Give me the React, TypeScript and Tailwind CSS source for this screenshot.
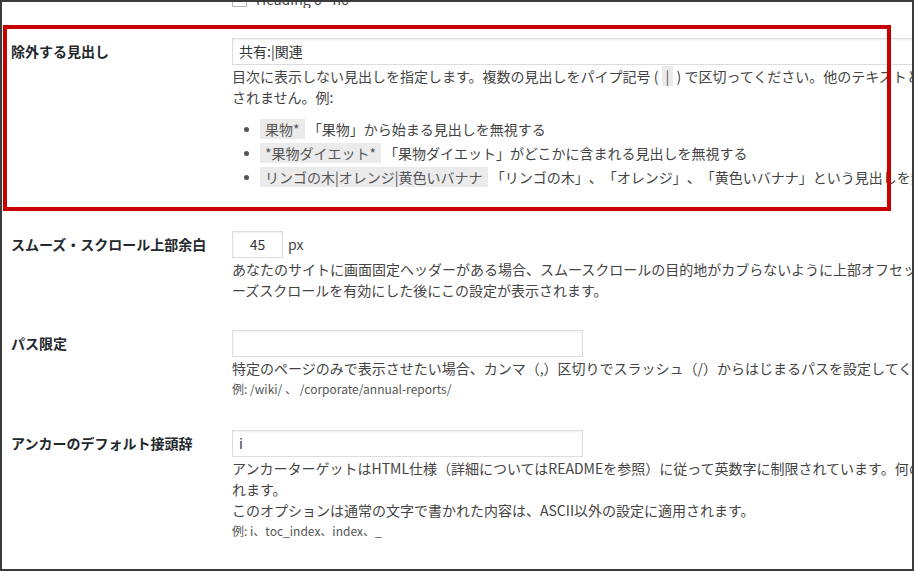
import React from "react";

const font = { fontFamily: '"Noto Sans CJK JP", "Noto Sans", sans-serif' };

function Label({ children }: { children: React.ReactNode }) {
  return (
    <div className="w-[230px] shrink-0 pl-[9px] text-[14px] font-bold leading-[27px] text-[#23282d] whitespace-nowrap">
      {children}
    </div>
  );
}

function TextInput({ value, className }: { value: string; className: string }) {
  return (
    <div
      className={`h-[27px] border border-[#dddddd] bg-white shadow-[inset_0_1px_2px_rgba(0,0,0,0.07)] text-[14px] leading-[25px] text-[#32373c] px-[6px] ${className}`}
    >
      {value}
    </div>
  );
}

function Code({ children }: { children: React.ReactNode }) {
  return (
    <span className="inline-block h-[20px] leading-[20px] px-[5px] bg-[#ebebeb] text-[#555]">
      {children}
    </span>
  );
}

function Item({ code, text }: { code: string; text: string }) {
  return (
    <li className="flex items-center h-[24px] pl-[12px] whitespace-nowrap">
      <span className="w-[5px] h-[5px] rounded-full bg-[#555] shrink-0" />
      <span className="ml-[11px]">
        <Code>{code}</Code> {text}
      </span>
    </li>
  );
}

export default function App() {
  return (
    <div
      className="relative w-[914px] h-[571px] overflow-hidden border-2 border-[#3b3b3b] bg-white [text-spacing-trim:space-all]"
      style={font}
    >
      {/* previous option group, scrolled mostly out of view */}
      <div className="h-[6px] overflow-hidden">
        <div className="-mt-[13px] pl-[230px] flex items-center gap-[9px] text-[14px] text-[#444]">
          <span className="w-[15px] h-[15px] border border-[#b4b9be] bg-white shadow-[inset_0_1px_2px_rgba(0,0,0,0.1)]" />
          <span>Heading 6 - h6</span>
        </div>
      </div>

      {/* 除外する見出し */}
      <div className="flex pt-[30px]">
        <Label>除外する見出し</Label>
        <div className="flex-1 min-w-0 text-[14px] text-[#444]">
          <TextInput value="共有:|関連" className="w-[760px]" />
          <p className="mt-[1px] leading-[21px] whitespace-nowrap">
            目次に表示しない見出しを指定します。複数の見出しをパイプ記号 ({" "}
            <span className="bg-[#ebebeb] px-[4px] text-[#555]">|</span>
            {" "}) で区切ってください。他のテキストと一致させるにはワイルドカードとしてアスタリスク ( * ) を使用します。大文字と小文字は区別
            <br />
            されません。例:
          </p>
          <ul className="mt-[9px]">
            <Item code="果物*" text="「果物」から始まる見出しを無視する" />
            <Item code="*果物ダイエット*" text="「果物ダイエット」がどこかに含まれる見出しを無視する" />
            <Item
              code="リンゴの木|オレンジ|黄色いバナナ"
              text="「リンゴの木」、「オレンジ」、「黄色いバナナ」という見出しを無視する"
            />
          </ul>
        </div>
      </div>

      {/* スムーズ・スクロール上部余白 */}
      <div className="flex pt-[42px]">
        <Label>スムーズ・スクロール上部余白</Label>
        <div className="flex-1 min-w-0 text-[14px] text-[#444]">
          <div className="flex items-center">
            <TextInput value="45" className="w-[51px] text-center" />
            <span className="ml-[5px] leading-[27px]">px</span>
          </div>
          <p className="mt-[1px] leading-[21px] whitespace-nowrap">
            あなたのサイトに画面固定ヘッダーがある場合、スムースクロールの目的地がカブらないように上部オフセットを設定してください。スム
            <br />
            ーズスクロールを有効にした後にこの設定が表示されます。
          </p>
        </div>
      </div>

      {/* パス限定 */}
      <div className="flex pt-[29px]">
        <Label>パス限定</Label>
        <div className="flex-1 min-w-0 text-[14px] text-[#444]">
          <TextInput value="" className="w-[351px]" />
          <p className="mt-[1px] leading-[21px] whitespace-nowrap">
            特定のページのみで表示させたい場合、カンマ（,）区切りでスラッシュ（/）からはじまるパスを設定してください。
          </p>
          <p className="text-[12px] leading-[19px] text-[#555] whitespace-nowrap">
            例: /wiki/ 、 /corporate/annual-reports/
          </p>
        </div>
      </div>

      {/* アンカーのデフォルト接頭辞 */}
      <div className="flex pt-[32px]">
        <Label>アンカーのデフォルト接頭辞</Label>
        <div className="flex-1 min-w-0 text-[14px] text-[#444]">
          <TextInput value="i" className="w-[351px]" />
          <p className="mt-[1px] leading-[21px] whitespace-nowrap">
            アンカーターゲットはHTML仕様（詳細についてはREADMEを参照）に従って英数字に制限されています。何の文字列も指定しない場合は自動的に生成さ
            <br />
            れます。
            <br />
            このオプションは通常の文字で書かれた内容は、ASCII以外の設定に適用されます。
          </p>
          <p className="text-[12px] leading-[19px] text-[#555] whitespace-nowrap">
            例: i、toc_index、index、_
          </p>
        </div>
      </div>

      {/* highlight frame around the first option */}
      <div className="absolute left-[1px] top-[23px] w-[888px] h-[186px] border-4 border-[#c80000] pointer-events-none" />
    </div>
  );
}
